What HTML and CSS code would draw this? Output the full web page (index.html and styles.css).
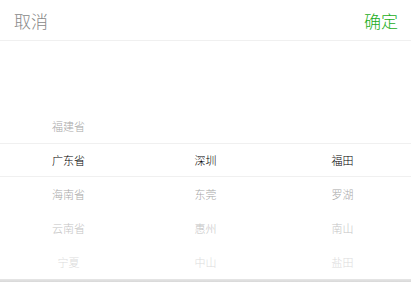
FILE: index.html
```html
<!DOCTYPE html>
<html lang="zh-CN">

<head>
    <meta charset="UTF-8">
    <meta name="viewport" content="width=device-width, initial-scale=1.0">
    <title>地区选择</title>
    <link rel="stylesheet" href="styles.css">
</head>

<body>
    <div class="picker">
        <div class="picker-header">
            <button class="btn cancel">取消</button>
            <button class="btn confirm">确定</button>
        </div>

        <div class="picker-body">
            <div class="indicator"></div>

            <div class="column">
                <div class="item"></div>
                <div class="item"></div>
                <div class="item d1">福建省</div>
                <div class="item current">广东省</div>
                <div class="item d1">海南省</div>
                <div class="item d2">云南省</div>
                <div class="item d3">宁夏</div>
            </div>

            <div class="column">
                <div class="item"></div>
                <div class="item"></div>
                <div class="item"></div>
                <div class="item current">深圳</div>
                <div class="item d1">东莞</div>
                <div class="item d2">惠州</div>
                <div class="item d3">中山</div>
            </div>

            <div class="column">
                <div class="item"></div>
                <div class="item"></div>
                <div class="item"></div>
                <div class="item current">福田</div>
                <div class="item d1">罗湖</div>
                <div class="item d2">南山</div>
                <div class="item d3">盐田</div>
            </div>
        </div>
    </div>
    <div class="page-bottom"></div>
</body>

</html>
```

FILE: styles.css
```css
body {
    margin: 0;
    font-family: "Noto Sans CJK SC", "Noto Sans", sans-serif;
    background-color: #fff;
}

.picker {
    background-color: #fff;
}

.picker-header {
    display: flex;
    justify-content: space-between;
    align-items: center;
    height: 40px;
    padding: 0 13px 0 14px;
    border-bottom: 1px solid #f0f0f0;
}

.btn {
    padding: 0;
    border: none;
    background: none;
    font-family: inherit;
    font-size: 17px;
    font-weight: 300;
    line-height: 1;
    cursor: pointer;
}

.cancel {
    color: #888;
}

.confirm {
    color: #1aad19;
}

.picker-body {
    position: relative;
    display: flex;
    height: 238px;
}

.indicator {
    position: absolute;
    left: 0;
    right: 0;
    top: 102px;
    height: 32px;
    border-top: 1px solid #f0f0f0;
    border-bottom: 1px solid #f0f0f0;
    pointer-events: none;
}

.column {
    flex: 1;
}

.item {
    height: 34px;
    line-height: 34px;
    text-align: center;
    font-size: 11px;
    font-weight: 300;
    color: #000;
}

.item.current {
    color: #000;
}

.item.d1 {
    color: #a8a8a8;
}

.item.d2 {
    color: #c4c4c4;
}

.item.d3 {
    color: #dcdcdc;
}

.page-bottom {
    height: 3px;
    background: linear-gradient(#e6e6e6, #d8d8d8);
}
```
